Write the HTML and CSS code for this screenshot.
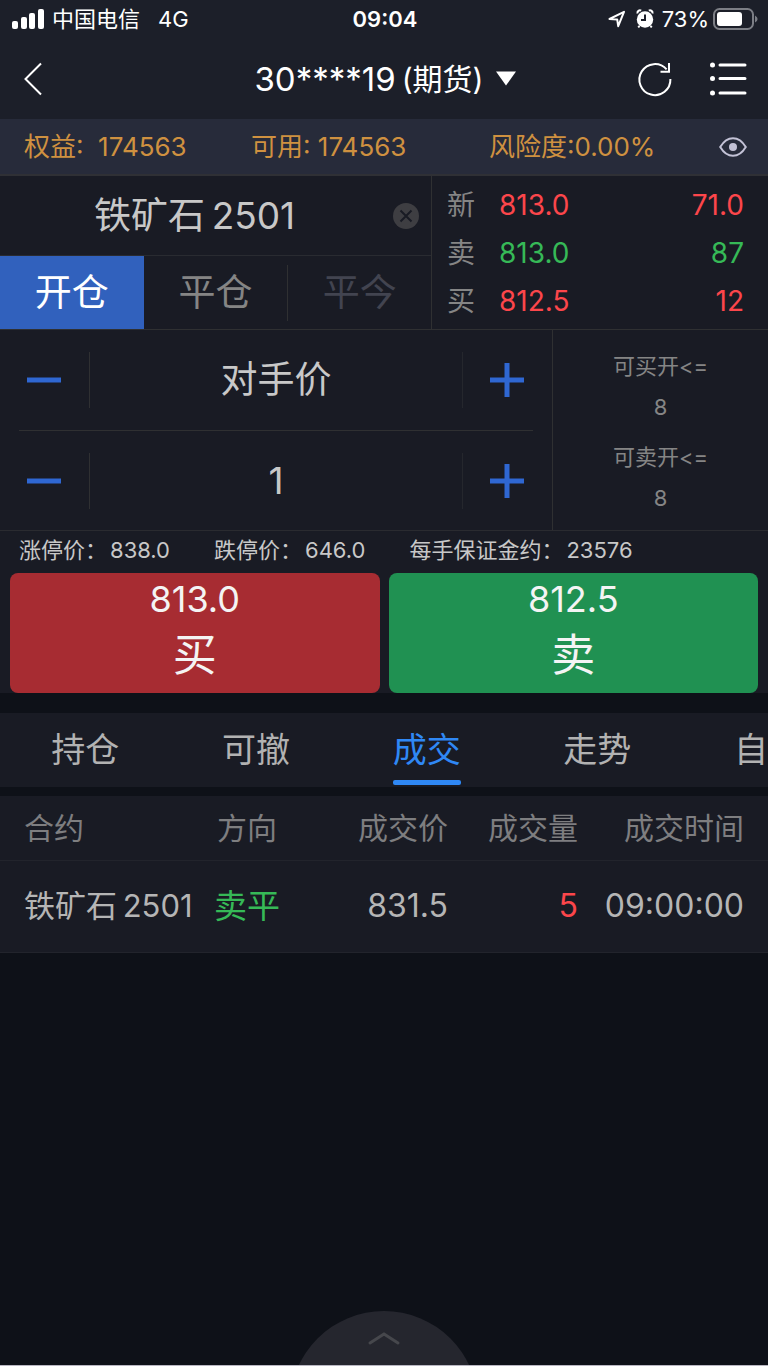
FILE: index.html
```html
<!DOCTYPE html>
<html lang="zh-CN">
<head>
<meta charset="utf-8">
<meta name="viewport" content="width=device-width, initial-scale=1">
<title>期货交易</title>
<link rel="stylesheet" href="styles.css">
</head>
<body>
<div class="app">
  <div class="status">
    <div class="status-left">
      <svg class="signal" viewBox="0 0 32 20" aria-hidden="true"><rect x="0" y="12" width="6" height="8" rx="2"/><rect x="9" y="8" width="6" height="12" rx="2"/><rect x="17" y="4" width="6" height="16" rx="2"/><rect x="26" y="0" width="6" height="20" rx="2"/></svg>
      <span>中国电信</span>
      <span class="network">4G</span>
    </div>
    <time class="clock">09:04</time>
    <div class="status-right">
      <svg class="locate" viewBox="0 0 18 18" aria-hidden="true"><path d="M1.5 9 L16 1.8 L10.2 16.2 L9.2 9.4 Z"/></svg>
      <svg class="alarm" viewBox="0 0 18 20" aria-hidden="true"><path class="bells" d="M1.5 4.5 A2.6 2.6 0 0 1 5.2 1.6 M16.5 4.5 A2.6 2.6 0 0 0 12.8 1.6 M3.6 17 L2.2 18.4 M14.4 17 L15.8 18.4"/><circle cx="9" cy="10.5" r="8.2"/><path class="hands" d="M9 5.5 V11 H5"/></svg>
      <span>73%</span>
      <svg class="battery" viewBox="0 0 45 22" aria-hidden="true"><rect class="shell" x="1" y="1" width="39" height="20" rx="5.5"/><rect class="charge" x="4" y="4" width="25" height="14" rx="3"/><path class="shell-tip" d="M42 7.5 Q44.6 9 44.6 11 Q44.6 13 42 14.5 Z"/></svg>
    </div>
  </div>

  <header class="nav">
    <button class="icon-button nav-back" type="button" aria-label="返回"><svg class="back" viewBox="0 0 18 34"><path d="M17 1.5 L1.5 17 L17 32.5"/></svg></button>
    <button class="account-switch" type="button">
      <span>30****19</span><span class="account-type">(期货)</span>
      <svg class="caret" viewBox="0 0 20 15"><path d="M0 0.5 H20 L10 14.5 Z"/></svg>
    </button>
    <div class="nav-actions">
      <button class="icon-button" type="button" aria-label="刷新"><svg class="refresh" viewBox="0 0 34 34"><path d="M32.4 17 A15.5 15.5 0 1 1 28.6 7.4 M22.5 9.8 H31 V1"/></svg></button>
      <button class="icon-button" type="button" aria-label="菜单"><svg class="menu" viewBox="0 0 36 34"><circle cx="2.5" cy="3" r="2.5"/><circle cx="2.5" cy="16.5" r="2.5"/><circle cx="2.5" cy="31" r="2.5"/><path d="M10 3 H35 M10 16.5 H35 M10 31 H35"/></svg></button>
    </div>
  </header>

  <section class="funds">
    <span>权益:&nbsp; 174563</span>
    <span>可用: 174563</span>
    <span>风险度:0.00%</span>
    <button class="icon-button" type="button" aria-label="显示或隐藏资金"><svg class="eye" viewBox="0 0 28 20"><path d="M1.2 10 C4.5 4.5 9 1.2 14 1.2 S23.5 4.5 26.8 10 C23.5 15.5 19 18.8 14 18.8 S4.5 15.5 1.2 10 Z"/><circle cx="14" cy="10" r="4"/></svg></button>
  </section>

  <main>
    <section class="quote">
      <div class="contract">
        <div class="contract-name">
          <input class="field" type="text" aria-label="合约" value="铁矿石&thinsp;2501">
          <button class="icon-button clear" type="button" aria-label="清除"><svg viewBox="0 0 26 26"><circle cx="13" cy="13" r="13"/><path d="M7.5 7.5 L18.5 18.5 M18.5 7.5 L7.5 18.5"/></svg></button>
        </div>
        <div class="modes">
          <button class="mode active" type="button">开仓</button>
          <button class="mode" type="button">平仓</button>
          <button class="mode divided" type="button" disabled>平今</button>
        </div>
      </div>
      <dl class="prices">
        <div class="price up"><dt>新</dt><dd>813.0</dd><dd class="volume">71.0</dd></div>
        <div class="price down"><dt>卖</dt><dd>813.0</dd><dd class="volume">87</dd></div>
        <div class="price up"><dt>买</dt><dd>812.5</dd><dd class="volume">12</dd></div>
      </dl>
    </section>

    <section class="order">
      <div class="steppers">
        <div class="stepper">
          <button class="step" type="button" aria-label="减价"><svg viewBox="0 0 34 34"><path d="M0 17 H34"/></svg></button>
          <input class="field entry entry-price" type="text" aria-label="价格" value="对手价">
          <button class="step" type="button" aria-label="加价"><svg viewBox="0 0 34 34"><path d="M0 17 H34 M17 0 V34"/></svg></button>
        </div>
        <div class="stepper">
          <button class="step" type="button" aria-label="减少手数"><svg viewBox="0 0 34 34"><path d="M0 17 H34"/></svg></button>
          <input class="field entry" type="text" aria-label="手数" value="1">
          <button class="step" type="button" aria-label="增加手数"><svg viewBox="0 0 34 34"><path d="M0 17 H34 M17 0 V34"/></svg></button>
        </div>
      </div>
      <div class="allowed">
        <p>可买开&lt;=<br>8</p>
        <p>可卖开&lt;=<br>8</p>
      </div>
    </section>

    <div class="limits">
      <span>涨停价：<span class="limit-value">838.0</span></span>
      <span>跌停价：<span class="limit-value">646.0</span></span>
      <span>每手保证金约：<span class="limit-value">23576</span></span>
    </div>

    <div class="trade">
      <button class="trade-button buy" type="button"><span>813.0</span><span class="side">买</span></button>
      <button class="trade-button sell" type="button"><span>812.5</span><span class="side">卖</span></button>
    </div>

    <nav class="tabs" role="tablist">
      <button class="tab" type="button" role="tab">持仓</button>
      <button class="tab" type="button" role="tab">可撤</button>
      <button class="tab current" type="button" role="tab" aria-selected="true">成交</button>
      <button class="tab" type="button" role="tab">走势</button>
      <button class="tab" type="button" role="tab">自选</button>
    </nav>

    <table class="deals">
      <colgroup><col class="col-contract"><col class="col-side"><col class="col-price"><col class="col-amount"><col></colgroup>
      <thead>
        <tr><th class="start">合约</th><th class="middle">方向</th><th>成交价</th><th>成交量</th><th>成交时间</th></tr>
      </thead>
      <tbody>
        <tr><td class="start deal-name">铁矿石&thinsp;2501</td><td class="middle deal-side">卖平</td><td>831.5</td><td class="deal-amount">5</td><td>09:00:00</td></tr>
      </tbody>
    </table>
  </main>

  <footer class="drawer">
    <button class="drawer-handle" type="button" aria-label="展开"><svg viewBox="0 0 172 54"><circle class="dome" cx="86" cy="94" r="94"/><path d="M72 32 L86 23 L100 32"/></svg></button>
  </footer>
</div>
</body>
</html>
```
FILE: styles.css
```css
* {
  box-sizing: border-box;
}

body {
  margin: 0;
  background: #0e1118;
  color: #c8c8c8;
  font-family: Inter, "Noto Sans CJK SC", sans-serif;
  font-size: 22px;
}

button,
input {
  margin: 0;
  padding: 0;
  border: 0;
  background: none;
  color: inherit;
  font: inherit;
}

p,
dl,
dd {
  margin: 0;
}

svg {
  display: block;
  overflow: visible;
}

.app {
  display: flex;
  flex-direction: column;
  min-height: 100vh;
  border-bottom: 1px solid #b9b7c2;
}

.icon-button {
  display: flex;
  align-items: center;
  justify-content: center;
}

/* Status bar */

.status {
  display: grid;
  grid-template-columns: 1fr auto 1fr;
  align-items: center;
  height: 40px;
  padding: 0 10px 2px 12px;
  background: #1c1f29;
  color: #fff;
  line-height: 24px;
}

.status-left,
.status-right {
  display: flex;
  align-items: center;
}

.status-right {
  justify-content: flex-end;
}

.signal {
  width: 32px;
  height: 20px;
  margin-right: 8px;
  fill: #fff;
}

.network {
  margin-left: 18px;
}

.clock {
  font-weight: 600;
}

.locate {
  width: 18px;
  height: 18px;
  margin-right: 10px;
  fill: none;
  stroke: #fff;
  stroke-width: 2;
  stroke-linejoin: round;
}

.alarm {
  width: 18px;
  height: 20px;
  margin-right: 8px;
  fill: #fff;
}

.bells {
  fill: none;
  stroke: #fff;
  stroke-width: 2;
}

.hands {
  fill: none;
  stroke: #1c1f29;
  stroke-width: 2;
}

.battery {
  width: 45px;
  height: 22px;
  margin-left: 4px;
}

.shell {
  fill: none;
  stroke: #7c7e85;
  stroke-width: 2;
}

.shell-tip {
  fill: #7c7e85;
}

.charge {
  fill: #fff;
}

/* Title bar */

.nav {
  display: grid;
  grid-template-columns: 1fr auto 1fr;
  align-items: center;
  height: 79px;
  padding: 0 22px 2px 24px;
  background: #1c1f29;
  color: #fff;
}

.nav-back {
  justify-self: start;
}

.back {
  width: 18px;
  height: 34px;
  fill: none;
  stroke: #fff;
  stroke-width: 2;
}

.account-switch {
  display: flex;
  align-items: center;
  font-size: 33px;
  line-height: 40px;
}

.account-type {
  margin-left: 6px;
  font-size: 30px;
}

.caret {
  width: 20px;
  height: 15px;
  margin-left: 12px;
  fill: #fff;
}

.nav-actions {
  display: flex;
  justify-content: flex-end;
  gap: 38px;
}

.refresh {
  width: 34px;
  height: 34px;
  fill: none;
  stroke: #fff;
  stroke-width: 2;
}

.menu {
  width: 36px;
  height: 34px;
  fill: #fff;
  stroke: none;
}

.menu path {
  stroke: #fff;
  stroke-width: 3;
  stroke-linecap: round;
}

/* Account funds */

.funds {
  display: grid;
  grid-template-columns: 227fr 238fr 230fr auto;
  align-items: center;
  height: 57px;
  padding: 0 21px 0 24px;
  border-bottom: 2px solid #2f3035;
  background: #272b3a;
  color: #cf9140;
  font-size: 26px;
  line-height: 32px;
  white-space: nowrap;
}

.eye {
  width: 28px;
  height: 20px;
  fill: none;
  stroke: #c3c2d6;
  stroke-width: 2;
}

.eye circle {
  fill: #c3c2d6;
  stroke: none;
}

/* Contract and quotes */

.quote {
  display: grid;
  grid-template-columns: 432fr 336fr;
  border-bottom: 1px solid #2f3032;
  background: #191b24;
}

.contract {
  border-right: 1px solid #2f3032;
}

.field {
  width: 100%;
  min-width: 0;
  text-align: center;
  font-size: 37px;
}

.contract-name {
  display: flex;
  align-items: center;
  height: 79px;
  padding-right: 12px;
}

.contract-name .field {
  padding: 0 4px 6px 0;
}

.clear svg {
  width: 26px;
  height: 26px;
  fill: #3e3e42;
  stroke: #191b24;
  stroke-width: 2;
}

.clear circle {
  stroke: none;
}

.modes {
  display: grid;
  grid-template-columns: repeat(3, 1fr);
  height: 74px;
  border-top: 1px solid #292b31;
}

.mode {
  color: #858585;
  font-size: 37px;
  line-height: 56px;
}

.mode.active {
  background: #3161bd;
  color: #fff;
}

.mode.divided {
  align-self: center;
  border-left: 1px solid #2f3032;
  color: #424450;
}

.prices {
  display: flex;
  flex-direction: column;
  justify-content: center;
  padding: 0 24px 0 15px;
  font-size: 28px;
  line-height: 48px;
}

.price {
  display: grid;
  grid-template-columns: 52px 1fr auto;
}

.price dt {
  color: #858585;
}

.up dd {
  color: #fc464b;
}

.down dd {
  color: #36b957;
}

/* Order entry */

.order {
  display: grid;
  grid-template-columns: 553fr 215fr;
  border-bottom: 1px solid #2a2b30;
  background: #191b24;
}

.steppers {
  padding: 0 19px;
  border-right: 1px solid #2f3032;
}

.stepper {
  display: grid;
  grid-template-columns: 70px 1fr 70px;
  align-items: center;
  height: 100px;
}

.stepper + .stepper {
  border-top: 1px solid #2f3032;
}

.step {
  display: flex;
  align-items: center;
  height: 56px;
  padding-left: 8px;
}

.step:last-child {
  justify-content: flex-end;
  padding: 0 9px 0 0;
}

.step svg {
  width: 34px;
  height: 34px;
  stroke: #2f67d2;
  stroke-width: 5;
}

.entry {
  height: 56px;
  border-left: 1px solid #2f3032;
  border-right: 1px solid #25272d;
}

.entry-price {
  padding-bottom: 6px;
}

.allowed {
  display: flex;
  flex-direction: column;
  justify-content: center;
  gap: 9px;
  padding-top: 5px;
  color: #858585;
  text-align: center;
  line-height: 41px;
}

/* Price limits and margin */

.limits {
  display: flex;
  gap: 44px;
  padding: 0 19px 4px;
  background: #191b24;
  line-height: 38px;
  white-space: nowrap;
}

.limit-value {
  margin-left: 3px;
}

/* Buy and sell */

.trade {
  display: grid;
  grid-template-columns: 1fr 1fr;
  gap: 9px;
  padding: 0 10px;
  background: #191b24;
}

.trade-button {
  display: flex;
  flex-direction: column;
  align-items: center;
  height: 120px;
  border-radius: 8px;
  color: #f4f4f4;
  font-size: 36px;
  line-height: 52px;
}

.side {
  font-size: 44px;
  line-height: 60px;
}

.buy {
  background: #a72c32;
}

.sell {
  background: #209152;
}

/* Section tabs */

.tabs {
  display: flex;
  margin: 20px 0 9px;
  overflow: hidden;
  background: #191b24;
}

.tab {
  display: flex;
  flex: 0 0 calc(100% / 4.5);
  justify-content: center;
  height: 74px;
  color: #b2b2b2;
  font-size: 34px;
  line-height: 74px;
}

.current {
  color: #2f88f5;
}

.current::after {
  content: "";
  align-self: flex-end;
  width: 68px;
  height: 5px;
  margin: 0 0 2px -68px;
  border-radius: 2px;
  background: #2f88f5;
}

/* Deals */

.deals {
  width: 100%;
  border-collapse: separate;
  border-spacing: 0;
  table-layout: fixed;
  background: #191b24;
  white-space: nowrap;
}

.deals th,
.deals td {
  padding: 0 0 4px;
  border-bottom: 1px solid #22242c;
  text-align: right;
}

.deals th {
  height: 65px;
  color: #7e7e80;
  font-size: 30px;
  font-weight: 400;
}

.deals td {
  height: 92px;
  padding-bottom: 2px;
  color: #b5b5b5;
  font-size: 32px;
}

.deals .start {
  padding-left: 24px;
  text-align: left;
}

.deals .middle {
  text-align: center;
}

.deals th:last-child,
.deals td:last-child {
  padding-right: 24px;
}

.deals .deal-name {
  padding-bottom: 6px;
  font-size: 31px;
}

.deals .deal-side {
  padding-bottom: 6px;
  color: #36b957;
  font-size: 33px;
}

.deals .deal-amount {
  color: #fc464b;
}

.col-contract {
  width: 206px;
}

.col-side {
  width: 82px;
}

.col-price {
  width: 160px;
}

.col-amount {
  width: 130px;
}

/* Bottom drawer handle */

.drawer {
  display: flex;
  justify-content: center;
  margin-top: auto;
  overflow: hidden;
}

.drawer-handle svg {
  width: 172px;
  height: 54px;
  fill: none;
  stroke: #46474c;
  stroke-width: 3;
  stroke-linecap: round;
}

.drawer-handle .dome {
  fill: #25262e;
  stroke: none;
}
```
